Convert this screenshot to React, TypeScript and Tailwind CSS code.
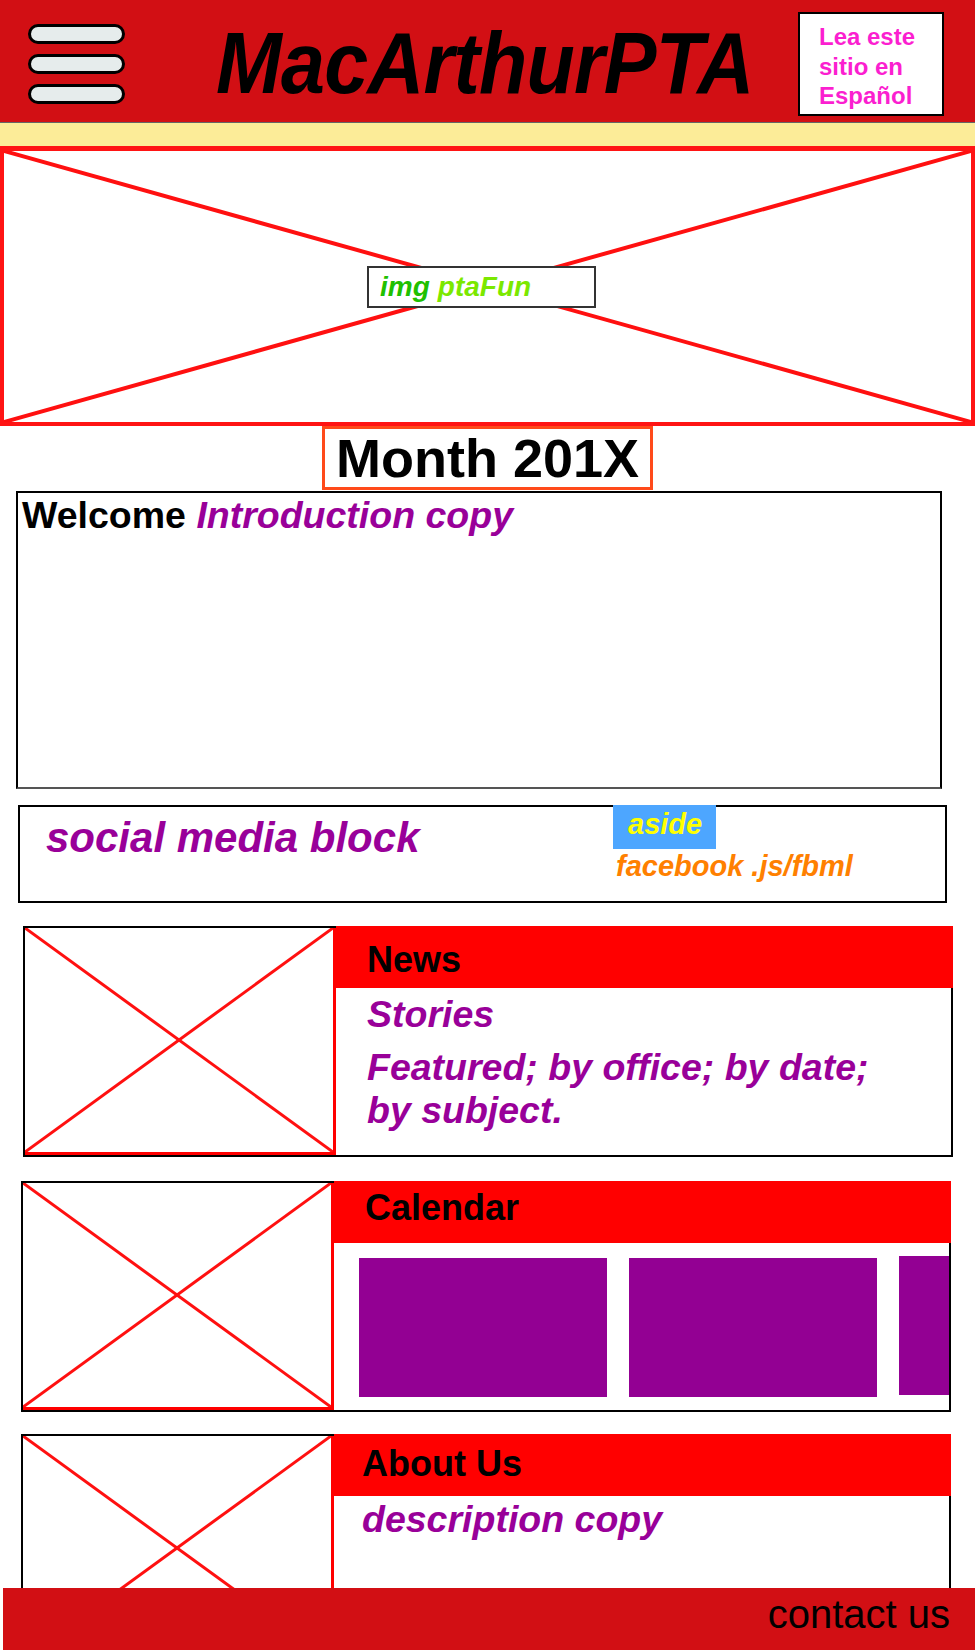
import type { ReactNode } from "react";

function Cross({ stroke = 3 }: { stroke?: number }) {
  return (
    <svg
      className="absolute inset-0 h-full w-full"
      viewBox="0 0 100 100"
      preserveAspectRatio="none"
    >
      <line x1="0" y1="0" x2="100" y2="100" stroke="#ff1010" strokeWidth={stroke} vectorEffect="non-scaling-stroke" />
      <line x1="100" y1="0" x2="0" y2="100" stroke="#ff1010" strokeWidth={stroke} vectorEffect="non-scaling-stroke" />
    </svg>
  );
}

function Card({
  title,
  offset,
  headClass,
  children,
}: {
  title: string;
  offset: string;
  headClass: string;
  children: ReactNode;
}) {
  return (
    <div className={`${offset} flex h-[231px] w-[930px] border-b-2 border-black`}>
      <div className="w-[313px] shrink-0 border-l-2 border-t-2 border-black">
        <div className="relative h-full border-r-[3px] border-b-[3px] border-[#ff0000]">
          <Cross />
        </div>
      </div>
      <div className="flex min-w-0 flex-1 flex-col">
        <div className={`h-[62px] shrink-0 bg-[#ff0000] ${headClass}`}>
          <h2 className="text-[36px] font-bold leading-none text-black">{title}</h2>
        </div>
        <div className="min-w-0 flex-1 overflow-hidden border-r-2 border-black">{children}</div>
      </div>
    </div>
  );
}

export default function App() {
  return (
    <div className="relative h-[1650px] w-[977px] overflow-hidden bg-white font-['Liberation_Sans',Arial,sans-serif]">
      <div className="w-[975px]">
        {/* header */}
        <header className="flex h-[122px] items-start bg-[#d20f14]">
          <div className="ml-[28px] mt-[24px] flex w-[97px] flex-col gap-[10px]">
            <span className="h-[20px] rounded-full border-[3px] border-black bg-[#e6ecec]" />
            <span className="h-[20px] rounded-full border-[3px] border-black bg-[#e6ecec]" />
            <span className="h-[20px] rounded-full border-[3px] border-black bg-[#e6ecec]" />
          </div>
          <h1 className="ml-[91px] mt-[27px] origin-bottom scale-y-110 text-[79px] font-bold italic leading-none tracking-[-0.8px] text-black">
            MacArthurPTA
          </h1>
          <div className="ml-auto mr-[31px] mt-[12px] h-[104px] w-[146px] border-2 border-black bg-white pl-[19px] pt-[8px] text-[24px] font-bold leading-[29.5px] text-[#fb1fd0]">
            Lea este
            <br />
            sitio en
            <br />
            Español
          </div>
        </header>

        <div className="h-[24px] border-t border-[#666] bg-[#fcec98]" />

        {/* hero image */}
        <div className="relative flex h-[280px] items-center justify-center border-[4px] border-t-[5px] border-[#ff1414]">
          <Cross stroke={4} />
          <div className="relative -ml-[12px] flex h-[42px] w-[229px] items-center border-2 border-[#333] bg-white pl-[11px] text-[28px] font-bold italic">
            <span className="text-[#20c000]">img</span>
            <span className="ml-[8px] text-[#7be800]">ptaFun</span>
          </div>
        </div>

        {/* month */}
        <div className="mx-auto flex h-[64px] w-[331px] items-center justify-center border-[3px] border-[#ff4a1a]">
          <span className="text-[54px] font-bold leading-none text-black">Month 201X</span>
        </div>

        {/* welcome */}
        <section className="ml-[16px] mt-px h-[298px] w-[926px] border-2 border-black border-b-[#555] pl-[4px] pt-px text-[37.5px] font-bold leading-[42px]">
          <span className="text-black">Welcome </span>
          <span className="italic text-[#990099]">Introduction copy</span>
        </section>

        {/* social */}
        <section className="ml-[18px] mt-[16px] flex h-[98px] w-[929px] border-2 border-black">
          <div className="w-[593px] shrink-0 pl-[26px] pt-[6px] text-[42px] font-bold italic leading-[49px] text-[#990099]">
            social media block
          </div>
          <div className="-mt-[2px] flex flex-col items-start">
            <div className="flex h-[44px] w-[103px] items-start bg-[#4da6ff] pl-[15px] pt-[2px] text-[29px] font-bold italic leading-[35px] text-[#ffff00]">
              aside
            </div>
            <div className="ml-[3px] text-[29px] font-bold italic leading-[35px] text-[#ff8000]">
              facebook .js/fbml
            </div>
          </div>
        </section>

        {/* news */}
        <div className="mt-[23px]">
          <Card title="News" offset="ml-[23px]" headClass="pl-[31px] pt-[16px]">
            <div className="pl-[31px] text-[37.5px] font-bold italic text-[#990099]">
              <p className="mt-[5px] leading-[42px]">Stories</p>
              <p className="mt-[11px] leading-[43px]">
                Featured; by office; by date;
                <br />
                by subject.
              </p>
            </div>
          </Card>
        </div>

        {/* calendar */}
        <div className="mt-[24px]">
          <Card title="Calendar" offset="ml-[21px]" headClass="pl-[31px] pt-[9px]">
            <div className="flex gap-[22px] pl-[25px] pt-[15px]">
              <div className="h-[139px] w-[248px] shrink-0 bg-[#930093]" />
              <div className="h-[139px] w-[248px] shrink-0 bg-[#930093]" />
              <div className="-mt-[2px] h-[139px] w-[248px] shrink-0 bg-[#930093]" />
            </div>
          </Card>
        </div>

        {/* about */}
        <div className="mt-[22px]">
          <Card title="About Us" offset="ml-[21px]" headClass="pl-[28px] pt-[12px]">
            <p className="mt-[2px] pl-[28px] text-[37.5px] font-bold italic leading-[42px] text-[#990099]">
              description copy
            </p>
          </Card>
        </div>
      </div>

      {/* footer */}
      <footer className="absolute bottom-0 left-[3px] right-[2px] flex h-[62px] items-start justify-end bg-[#d20f14] pr-[25px] pt-[6px]">
        <span className="text-[40px] leading-none text-black">contact us</span>
      </footer>
    </div>
  );
}
